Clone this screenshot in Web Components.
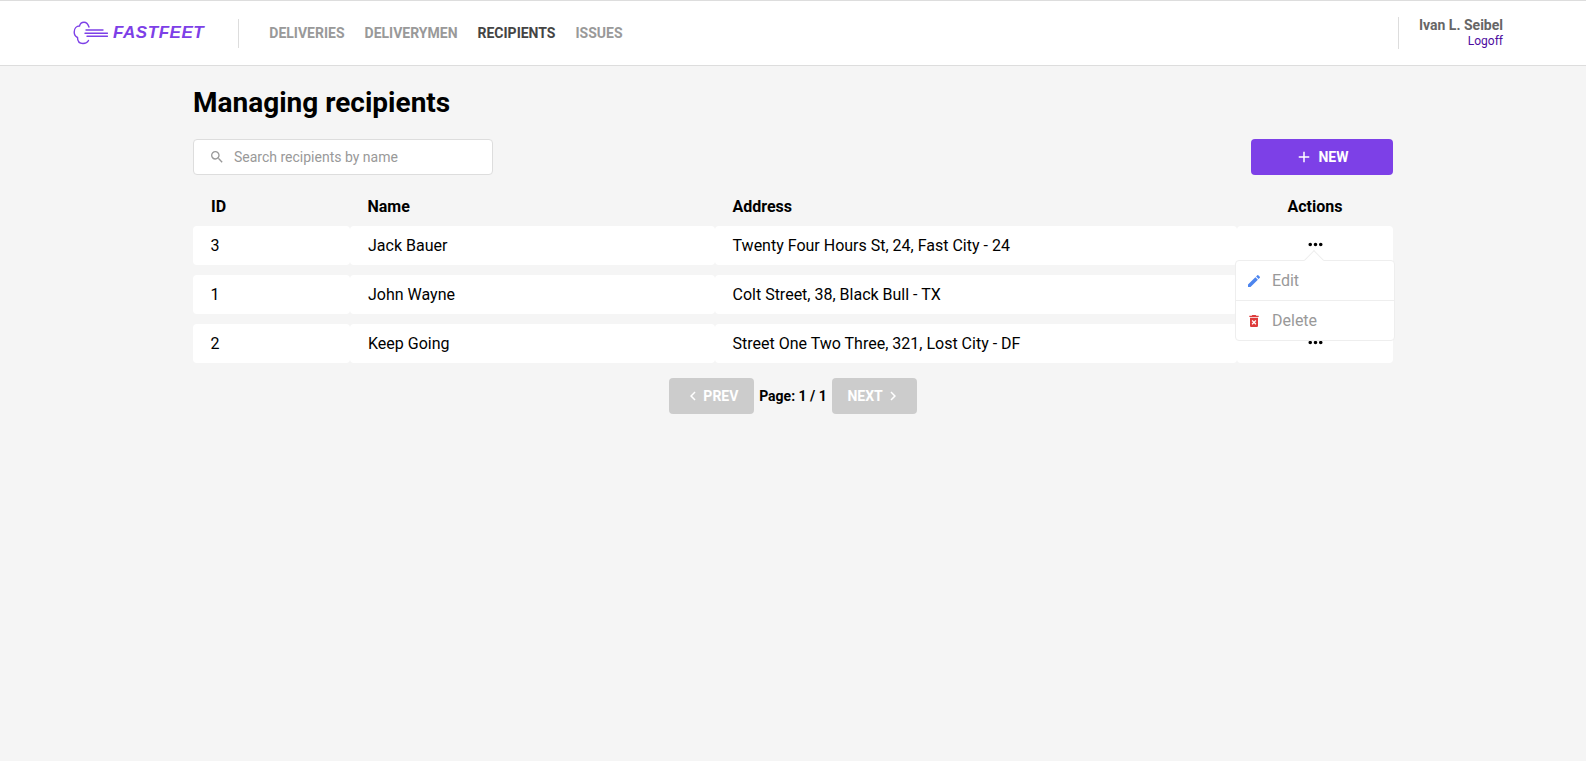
<!DOCTYPE html>
<html>
<head>
<meta charset="utf-8">
<title>FastFeet</title>
<style>
  html, body { margin: 0; height: 100%; }
  body { background: #f5f5f5; font-family: Roboto, "Liberation Sans", sans-serif; }
</style>
</head>
<body>
<fast-header></fast-header>
<recipients-page></recipients-page>

<script>
const ICONS = {
  search: '<path d="M15.5 14h-.79l-.28-.27A6.47 6.47 0 0 0 16 9.5 6.5 6.5 0 1 0 9.5 16c1.61 0 3.09-.59 4.23-1.57l.27.28v.79l5 4.99L20.49 19l-4.99-5zm-6 0C7.01 14 5 11.99 5 9.5S7.01 5 9.5 5 14 7.01 14 9.5 11.99 14 9.5 14z"/>',
  add: '<path d="M19 13h-6v6h-2v-6H5v-2h6V5h2v6h6v2z"/>',
  prev: '<path d="M15.41 7.41 14 6l-6 6 6 6 1.41-1.41L10.83 12z"/>',
  next: '<path d="M10 6 8.59 7.41 13.17 12l-4.58 4.59L10 18l6-6z"/>',
  more: '<path d="M6 10c-1.1 0-2 .9-2 2s.9 2 2 2 2-.9 2-2-.9-2-2-2zm12 0c-1.1 0-2 .9-2 2s.9 2 2 2 2-.9 2-2-.9-2-2-2zm-6 0c-1.1 0-2 .9-2 2s.9 2 2 2 2-.9 2-2-.9-2-2-2z"/>',
  edit: '<path d="M3 17.25V21h3.75L17.81 9.94l-3.75-3.75L3 17.25zM20.71 7.04a1 1 0 0 0 0-1.41l-2.34-2.34a1 1 0 0 0-1.41 0l-1.83 1.83 3.75 3.75 1.83-1.83z"/>',
  trash: '<path d="M6 19c0 1.1.9 2 2 2h8c1.1 0 2-.9 2-2V7H6v12zm2.46-7.12 1.41-1.41L12 12.59l2.12-2.12 1.41 1.41L13.41 14l2.12 2.12-1.41 1.41L12 15.41l-2.12 2.12-1.41-1.41L10.59 14l-2.13-2.12zM15.5 4l-1-1h-5l-1 1H5v2h14V4z"/>'
};

function icon(name, size, color) {
  return `<svg width="${size}" height="${size}" viewBox="0 0 24 24" fill="${color}" style="display:block;flex:none">${ICONS[name]}</svg>`;
}

class FastLogo extends HTMLElement {
  connectedCallback() {
    this.attachShadow({ mode: 'open' }).innerHTML = `
      <style>
        :host { display: flex; align-items: center; gap: 5px; color: #7d40e7; }
        span { font: italic bold 17px "Liberation Sans", sans-serif; letter-spacing: .55px; }
      </style>
      <svg width="35" height="24" viewBox="0 0 35 24" fill="none" stroke="#7d40e7" stroke-width="1.4" stroke-linecap="round">
        <path d="M16 6C15 3 13.500 1.200 11 1.200 8.500 1.200 7 3 6.500 5 3.500 5 1.200 7.500 1.200 11c0 2.500 1.300 4.500 3.300 5.500 0 3.500 2 6 5.500 6 2.500 0 4.500-1 5.500-3"/>
        <path d="M13 9H30"/>
        <path d="M12 12.300H34.500"/>
        <path d="M14 15.200H34.500"/>
      </svg>
      <span>FASTFEET</span>
    `;
  }
}

class FastHeader extends HTMLElement {
  connectedCallback() {
    const links = ['DELIVERIES', 'DELIVERYMEN', 'RECIPIENTS', 'ISSUES'];
    this.attachShadow({ mode: 'open' }).innerHTML = `
      <style>
        :host {
          display: flex; align-items: center; box-sizing: border-box; height: 66px;
          padding: 0 83px 0 73px; background: #fff;
          border-top: 1px solid #ddd; border-bottom: 1px solid #ddd;
        }
        nav {
          display: flex; align-items: center; gap: 20px; height: 29px;
          margin-left: 34px; padding-left: 30px; border-left: 1px solid #ddd;
        }
        a { font-size: 14px; font-weight: 700; color: #999; }
        a.active { color: #444; }
        .user {
          margin-left: auto; padding-left: 20px; height: 32px; border-left: 1px solid #ddd;
          display: flex; flex-direction: column; align-items: flex-end; justify-content: center;
        }
        strong { font-size: 14px; line-height: 17px; color: #666; }
        .logoff { font-size: 12px; line-height: 15px; color: #4d0ca0; }
      </style>
      <fast-logo></fast-logo>
      <nav>${links.map((l) => `<a class="${l === 'RECIPIENTS' ? 'active' : ''}">${l}</a>`).join('')}</nav>
      <div class="user">
        <strong>Ivan L. Seibel</strong>
        <span class="logoff">Logoff</span>
      </div>
    `;
  }
}

class RecipientRow extends HTMLElement {
  connectedCallback() {
    this.attachShadow({ mode: 'open' }).innerHTML = `
      <style>
        :host {
          display: grid; grid-template-columns: 157px 364.500px 522.500px 156px; height: 39px;
          margin-bottom: 10px; font-size: 16px; color: #000;
        }
        div {
          display: flex; align-items: center; padding-left: 18px; background: #fff;
          border-radius: 4px; line-height: 39px;
        }
        div:nth-child(2) { padding-left: 17.500px; }
        .actions { position: relative; justify-content: center; padding: 0 0 3px 0; box-sizing: border-box; }
      </style>
      <div>${this.getAttribute('rid')}</div>
      <div>${this.getAttribute('name')}</div>
      <div>${this.getAttribute('address')}</div>
      <div class="actions">${icon('more', 21, '#000')}<slot></slot></div>
    `;
  }
}

class ActionMenu extends HTMLElement {
  connectedCallback() {
    this.attachShadow({ mode: 'open' }).innerHTML = `
      <style>
        :host {
          position: absolute; top: 34px; left: -2px; width: 160px; z-index: 2;
          box-sizing: border-box; background: #fff; border: 1px solid #eee; border-radius: 4px;
          font-size: 16px; color: #999;
        }
        :host::before {
          content: ""; position: absolute; top: -8px; left: 71px; width: 13px; height: 13px;
          background: #fff; border-top: 1px solid #eee; border-left: 1px solid #eee;
          transform: rotate(45deg);
        }
        .item { position: relative; display: flex; align-items: center; gap: 10px; height: 39px; padding-left: 10px; }
        .item + .item { border-top: 1px solid #eee; }
      </style>
      <div class="item">${icon('edit', 16, '#4d85ee')}Edit</div>
      <div class="item">${icon('trash', 16, '#de3b3b')}Delete</div>
    `;
  }
}

class PageButton extends HTMLElement {
  connectedCallback() {
    const dir = this.getAttribute('dir-icon');
    const label = `<span>${this.getAttribute('label')}</span>`;
    const ic = icon(dir, 18, '#fff');
    this.attachShadow({ mode: 'open' }).innerHTML = `
      <style>
        :host {
          display: flex; align-items: center; justify-content: center; gap: 1px;
          box-sizing: border-box; width: 85px; height: 36px; background: #ccc;
          border-radius: 4px; color: #fff; font-size: 14px; font-weight: 700;
        }
      </style>
      ${dir === 'prev' ? ic + label : label + ic}
    `;
  }
}

class RecipientsPage extends HTMLElement {
  connectedCallback() {
    this.attachShadow({ mode: 'open' }).innerHTML = `
      <style>
        :host { display: block; width: 1200px; margin: 0 0 0 193px; color: #000; }
        h1 { margin: 0; padding-top: 20px; font-size: 28px; line-height: 33px; font-weight: 700; }
        .bar { display: flex; justify-content: space-between; margin-top: 20px; }
        .search {
          display: flex; align-items: center; gap: 9px; box-sizing: border-box;
          width: 300px; height: 36px; padding-left: 15px; background: #fff;
          border: 1px solid #ddd; border-radius: 4px; font-size: 14px; color: #999;
        }
        .new {
          display: flex; align-items: center; justify-content: center; gap: 5px;
          width: 142px; height: 36px; background: #7d40e7; border-radius: 4px;
          color: #fff; font-size: 14px; font-weight: 700;
        }
        .head {
          display: grid; grid-template-columns: 157px 364.500px 522.500px 156px; height: 51px;
          box-sizing: border-box; padding-top: 12px;
          align-items: center; font-size: 16px; font-weight: 700;
        }
        .head span { padding-left: 18px; }
        .head span:nth-child(2) { padding-left: 17.500px; }
        .head .c { padding: 0; text-align: center; }
        .pager { display: flex; justify-content: center; align-items: center; gap: 5.300px; margin-top: 15px; }
        .pager b { font-size: 14px; }
      </style>
      <h1>Managing recipients</h1>
      <div class="bar">
        <div class="search">${icon('search', 16, '#999')}Search recipients by name</div>
        <div class="new">${icon('add', 18, '#fff')}NEW</div>
      </div>
      <div class="head">
        <span>ID</span><span>Name</span><span>Address</span><span class="c">Actions</span>
      </div>
      <recipient-row rid="3" name="Jack Bauer" address="Twenty Four Hours St, 24, Fast City - 24">
        <action-menu></action-menu>
      </recipient-row>
      <recipient-row rid="1" name="John Wayne" address="Colt Street, 38, Black Bull - TX"></recipient-row>
      <recipient-row rid="2" name="Keep Going" address="Street One Two Three, 321, Lost City - DF"></recipient-row>
      <div class="pager">
        <page-button dir-icon="prev" label="PREV"></page-button>
        <b>Page: 1 / 1</b>
        <page-button dir-icon="next" label="NEXT"></page-button>
      </div>
    `;
  }
}

customElements.define('fast-logo', FastLogo);
customElements.define('fast-header', FastHeader);
customElements.define('recipient-row', RecipientRow);
customElements.define('action-menu', ActionMenu);
customElements.define('page-button', PageButton);
customElements.define('recipients-page', RecipientsPage);
</script>
</body>
</html>
